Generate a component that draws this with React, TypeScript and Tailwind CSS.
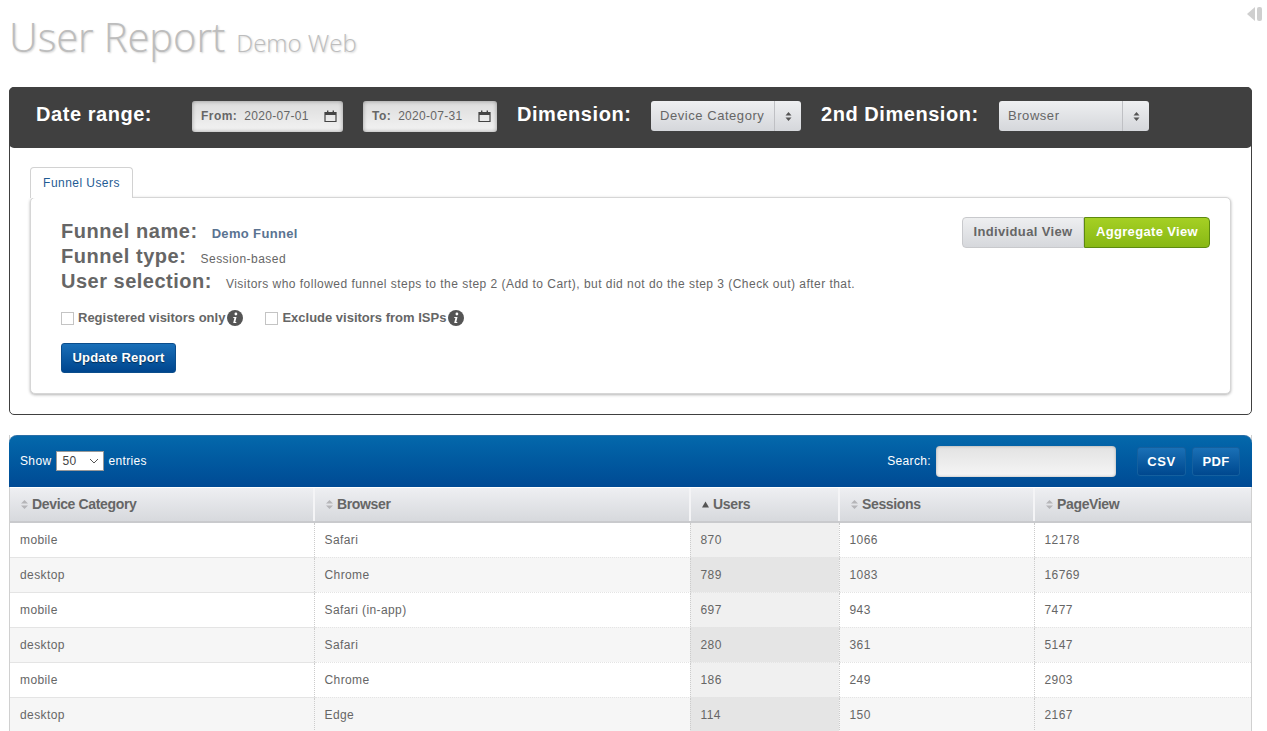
import React from "react";

const rows = [
  ["mobile", "Safari", "870", "1066", "12178"],
  ["desktop", "Chrome", "789", "1083", "16769"],
  ["mobile", "Safari (in-app)", "697", "943", "7477"],
  ["desktop", "Safari", "280", "361", "5147"],
  ["mobile", "Chrome", "186", "249", "2903"],
  ["desktop", "Edge", "114", "150", "2167"],
];

const Cal = () => (
  <svg width="13" height="12" viewBox="0 0 13 12" className="shrink-0 block">
    <path d="M1 2.5h11v9H1z" fill="none" stroke="#444" strokeWidth="1.2" />
    <rect x="1" y="2" width="11" height="3" fill="#444" />
    <rect x="3" y="0.5" width="1.4" height="2.5" fill="#444" />
    <rect x="8.6" y="0.5" width="1.4" height="2.5" fill="#444" />
  </svg>
);

const Info = () => (
  <svg width="16" height="16" viewBox="0 0 16 16" className="shrink-0 block">
    <circle cx="8" cy="8" r="8" fill="#555" />
    <circle cx="8.9" cy="4" r="1.4" fill="#fff" />
    <path d="M6.4 7h3.1l-1.2 5h1v1H6.2l1.2-5h-1.2z" fill="#fff" />
  </svg>
);

const Sort = () => (
  <svg width="7" height="9" viewBox="0 0 7 9" className="shrink-0">
    <path d="M3.5 0L7 3.6H0z M3.5 9L0 5.4h7z" fill="#b5b5b8" />
  </svg>
);

const Spin = () => (
  <svg width="7" height="11" viewBox="0 0 7 11">
    <path d="M3.5 1L6.5 4.5h-6z M3.5 10L.5 6.5h6z" fill="#555" />
  </svg>
);

function DateField({ label, value, w }: { label: string; value: string; w: string }) {
  return (
    <div className={`${w} h-[31px] rounded-[3px] bg-gradient-to-b from-[#dcdcdc] to-[#f3f3f3] shadow-[inset_0_0_4px_rgba(0,0,0,0.35)] flex items-center pl-[9px] pr-[6px] text-[12px] tracking-[0.3px] font-normal text-[#666]`}>
      <span className="font-bold tracking-[0.45px]">{label}</span>
      <span className="ml-[7px]">{value}</span>
      <span className="ml-auto"><Cal /></span>
    </div>
  );
}

function SelectBox({ value, w }: { value: string; w: string }) {
  return (
    <div className={`${w} h-[30px] rounded-[3px] bg-gradient-to-b from-[#eeeff1] to-[#d5d7db] flex items-center text-[13px] tracking-[0.55px] font-normal text-[#666]`}>
      <span className="pl-[9px] flex-1 whitespace-nowrap">{value}</span>
      <span className="w-[27px] h-full border-l border-[#bfc0c4] flex items-center justify-center"><Spin /></span>
    </div>
  );
}

function Th({ children, w, sorted }: { children: string; w: string; sorted?: boolean }) {
  return (
    <th className={`${w} h-[34px] p-0 text-left font-bold text-[14px] text-[#666] tracking-[-0.35px] bg-gradient-to-b from-[#eeeff2] to-[#d7d9dd] border-b-2 border-[#c9cacd] border-r-2 border-r-[#f4f4f6] last:border-r-0`}>
      <span className="flex items-center gap-[4px] pl-[11px]">
        {sorted ? (
          <svg width="7" height="7" viewBox="0 0 7 7" className="shrink-0"><path d="M3.5 0.5L7 6.5H0z" fill="#555" /></svg>
        ) : (
          <Sort />
        )}
        {children}
      </span>
    </th>
  );
}

export default function App() {
  return (
    <div className="h-screen overflow-hidden relative bg-white pl-[9px] pr-[15px] font-['Liberation_Sans',Arial,sans-serif]">
      <svg width="17" height="14" viewBox="0 0 17 14" className="absolute right-[4px] top-[7px]">
        <path d="M9 0v14L1 7z" fill="#cfcfcf" />
        <rect x="11" y="0" width="5" height="14" rx="2" fill="#cfcfcf" />
      </svg>

      <div className="h-[87px] flex items-baseline pt-[9px] font-['Open_Sans',sans-serif] text-[#bdbdbd] [text-shadow:1px_1px_2px_rgba(0,0,0,0.18)]">
        <h1 className="text-[40px] leading-[56px] font-light tracking-[-0.1px]">User Report</h1>
        <span className="text-[24px] ml-[11px] font-light">Demo Web</span>
      </div>

      <section className="border border-[#404040] rounded-[5px] h-[328px]">
        <div className="h-[61px] -m-px mb-0 bg-[#404040] rounded-[5px] flex items-center text-white font-bold pb-[3px]">
          <span className="text-[20px] ml-[27px] w-[156px] tracking-[0.55px] -mt-[4px]">Date range:</span>
          <DateField label="From:" value="2020-07-01" w="w-[151px]" />
          <div className="w-[20px]" />
          <DateField label="To:" value="2020-07-31" w="w-[134px]" />
          <span className="text-[20px] ml-[20px] w-[134px] tracking-[0.55px] -mt-[4px]">Dimension:</span>
          <SelectBox value="Device Category" w="w-[150px]" />
          <span className="text-[20px] ml-[20px] w-[178px] tracking-[0.55px] whitespace-nowrap -mt-[4px]">2nd Dimension:</span>
          <SelectBox value="Browser" w="w-[150px]" />
        </div>

        <div className="px-[20px] pt-[19px]">
          <div className="w-[103px] h-[31px] -mb-px relative z-10 bg-white border border-[#d2d2d2] border-b-0 rounded-t-[4px] flex items-center justify-center text-[12px] tracking-[0.45px] text-[#1f5c94]">
            Funnel Users
          </div>
          <div className="h-[197px] border border-[#d6d6d6] rounded-[5px] shadow-[0_1px_3px_rgba(0,0,0,0.3)] bg-white relative pl-[30px] pt-[18px] text-[#666]">
            <div className="absolute right-[20px] top-[19px] flex h-[31px] text-[13px] font-bold tracking-[0.35px]">
              <div className="w-[122px] pb-[2px] rounded-l-[4px] border border-[#c8c9cc] bg-gradient-to-b from-[#eeeff1] to-[#d6d8dc] text-[#666] flex items-center justify-center">Individual View</div>
              <div className="w-[126px] pb-[2px] rounded-r-[4px] border border-[#5d8a10] bg-gradient-to-b from-[#a5d024] to-[#88b814] text-white flex items-center justify-center">Aggregate View</div>
            </div>
            <div className="flex items-baseline h-[25px]">
              <span className="font-bold text-[20px] tracking-[0.55px] text-[#666]">Funnel name:</span>
              <span className="ml-[14px] text-[13px] font-bold tracking-[0.35px] text-[#5a7391]">Demo Funnel</span>
            </div>
            <div className="flex items-baseline h-[25px]">
              <span className="font-bold text-[20px] tracking-[0.55px] text-[#666]">Funnel type:</span>
              <span className="ml-[14px] text-[12px] tracking-[0.48px]">Session-based</span>
            </div>
            <div className="flex items-baseline h-[25px]">
              <span className="font-bold text-[20px] tracking-[0.5px] text-[#666]">User selection:</span>
              <span className="ml-[14px] text-[12px] tracking-[0.47px]">Visitors who followed funnel steps to the step 2 (Add to Cart), but did not do the step 3 (Check out) after that.</span>
            </div>
            <div className="flex items-center mt-[18px] h-[18px] text-[13px] font-bold">
              <span className="w-[13px] h-[13px] border border-[#c4c4c4] bg-white" />
              <span className="ml-[4px]">Registered visitors only</span>
              <span className="ml-[2px]"><Info /></span>
              <span className="ml-[22px] w-[13px] h-[13px] border border-[#c4c4c4] bg-white" />
              <span className="ml-[4px]">Exclude visitors from ISPs</span>
              <span className="ml-[2px]"><Info /></span>
            </div>
            <button className="mt-[16px] w-[115px] h-[30px] rounded-[3px] border border-[#0b4d8c] bg-gradient-to-b from-[#1a6fb8] to-[#00458e] text-white text-[13px] font-bold tracking-[0.2px] [text-shadow:0_1px_1px_rgba(0,0,0,0.5)] block">
              Update Report
            </button>
          </div>
        </div>
      </section>

      <section className="mt-[20px] border-x border-[#d0d0d0]">
        <div className="-mx-px h-[52px] rounded-t-[8px] border-t border-[#2a6ea6] bg-gradient-to-b from-[#0468ab] to-[#004a94] flex items-center text-white text-[12px] tracking-[0.35px] pl-[11px] pr-[12px]">
          <span className="-mt-[2px]">Show</span>
          <span className="ml-[5px] -mt-[2px] w-[48px] h-[20px] bg-white border border-[#999] flex items-center justify-between pl-[5px] pr-[4px] text-[#444]">
            50
            <svg width="10" height="6" viewBox="0 0 10 6"><path d="M1 1l4 4 4-4" fill="none" stroke="#555" strokeWidth="1" /></svg>
          </span>
          <span className="ml-[4px] -mt-[2px]">entries</span>
          <span className="ml-auto -mt-[2px]">Search:</span>
          <span className="ml-[5px] w-[180px] h-[31px] rounded-[4px] bg-gradient-to-b from-[#e2e2e2] to-[#f6f6f6] shadow-[inset_0_0_3px_rgba(0,0,0,0.3)]" />
          <span className="ml-[21px] w-[49px] h-[29px] rounded-[3px] border border-[#14609f] bg-gradient-to-b from-[#1a70b6] to-[#00488f] flex items-center justify-center text-[13px] font-bold tracking-[0.6px]">CSV</span>
          <span className="ml-[6px] w-[48px] h-[29px] rounded-[3px] border border-[#14609f] bg-gradient-to-b from-[#1a70b6] to-[#00488f] flex items-center justify-center text-[13px] font-bold tracking-[0.3px]">PDF</span>
        </div>
        <table className="table-fixed w-full border-collapse mt-px text-[12px] tracking-[0.4px] text-[#666]">
          <thead>
            <tr>
              <Th w="w-[304px]">Device Category</Th>
              <Th w="w-[376px]">Browser</Th>
              <Th w="w-[149px]" sorted>Users</Th>
              <Th w="w-[195px]">Sessions</Th>
              <Th w="w-[217px]">PageView</Th>
            </tr>
          </thead>
          <tbody>
            {rows.map((r, i) => (
              <tr key={i} className={`h-[35px] ${i % 2 ? "bg-[#f6f6f6]" : "bg-white"}`}>
                {r.map((c, j) => (
                  <td
                    key={j}
                    className={`p-0 pl-[10px] border-b border-[#e4e4e4] ${j > 0 ? "border-l border-l-[#cccccc] border-dotted" : ""} ${j === 2 ? (i % 2 ? "bg-[#e5e5e5]" : "bg-[#f0f0f0]") : ""}`}
                  >
                    {c}
                  </td>
                ))}
              </tr>
            ))}
          </tbody>
        </table>
      </section>
    </div>
  );
}
